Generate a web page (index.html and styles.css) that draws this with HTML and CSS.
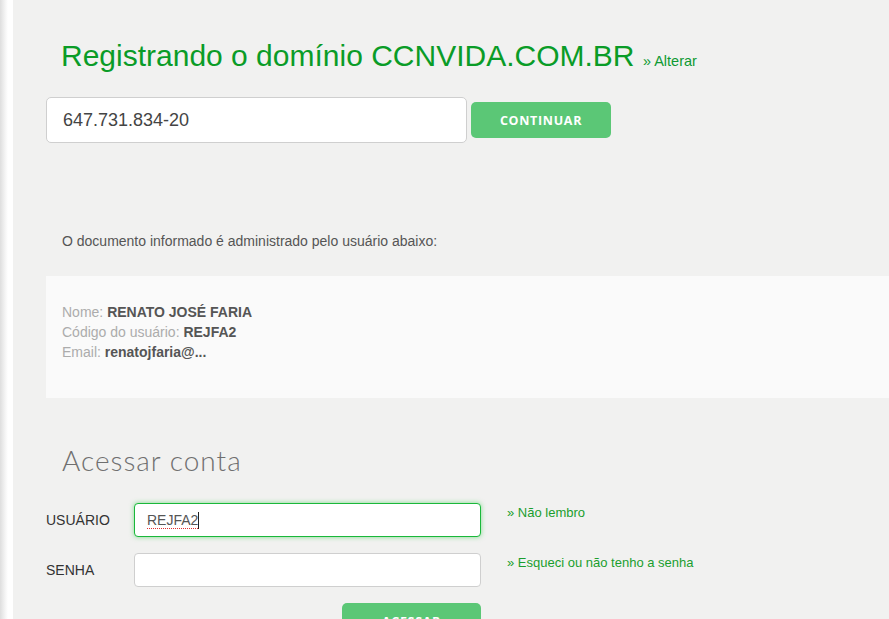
FILE: index.html
```html
<!DOCTYPE html>
<html lang="pt-BR">
<head>
<meta charset="utf-8">
<title>Registrando o domínio</title>
<link rel="stylesheet" href="styles.css">
</head>
<body>
<div class="page">
  <div class="edge"></div>
  <main class="main">
    <h1 class="title">Registrando o domínio CCNVIDA.COM.BR <a class="change" href="#">» Alterar</a></h1>
    <div class="doc-row">
      <div class="doc-input">647.731.834-20</div>
      <button class="btn btn-continue">CONTINUAR</button>
    </div>
    <p class="note">O documento informado é administrado pelo usuário abaixo:</p>
    <div class="user-box">
      <div class="line"><span class="lbl">Nome:</span> <b>RENATO JOSÉ FARIA</b></div>
      <div class="line"><span class="lbl">Código do usuário:</span> <b>REJFA2</b></div>
      <div class="line"><span class="lbl">Email:</span> <b>renatojfaria@...</b></div>
    </div>
    <h2 class="login-title">Acessar conta</h2>
    <div class="form-row">
      <label class="flabel">USUÁRIO</label>
      <div class="finput focus"><span class="typed">REJFA2</span><span class="caret"></span></div>
      <a class="flink" href="#">» Não lembro</a>
    </div>
    <div class="form-row">
      <label class="flabel">SENHA</label>
      <div class="finput"></div>
      <a class="flink" href="#">» Esqueci ou não tenho a senha</a>
    </div>
    <div class="submit-row">
      <button class="btn btn-access">ACESSAR</button>
    </div>
  </main>
</div>
</body>
</html>
```
FILE: styles.css
```css
html, body {
  margin: 0;
  padding: 0;
  background: #ffffff;
  height: 100%;
  overflow: hidden;
}
body {
  font-family: "Liberation Sans", Arial, sans-serif;
  color: #555;
}
.page {
  display: flex;
  min-height: 100%;
}
.edge {
  width: 13px;
  flex: none;
  background: linear-gradient(to right, #dedede 0px, #f4f4f4 5px, #ffffff 8px, #ffffff 13px);
}
.main {
  flex: 1;
  background: #f1f1f0;
  padding-left: 33px;
}
.title {
  margin: 38px 0 0 15px;
  height: 36px;
  font-size: 30px;
  line-height: 36px;
  font-weight: normal;
  color: #0a9c27;
  white-space: nowrap;
}
.change {
  font-size: 14.5px;
  line-height: 0;
  color: #0f9a33;
  text-decoration: none;
}
.doc-row {
  display: flex;
  align-items: center;
  margin-top: 23px;
  gap: 4px;
}
.doc-input {
  box-sizing: border-box;
  width: 421px;
  height: 46px;
  background: #fff;
  border: 1px solid #cfcfcf;
  border-radius: 5px;
  padding-left: 16px;
  font-size: 18px;
  line-height: 44px;
  color: #444;
}
.btn {
  border: none;
  border-radius: 5px;
  background: #5bc776;
  color: #fff;
  font-family: "Open Sans", "Liberation Sans", sans-serif;
  font-weight: 700;
  font-size: 12.5px;
  letter-spacing: 0.7px;
  width: 140px;
  height: 36px;
  padding: 0;
}
.note {
  margin: 88px 0 0 16px;
  font-size: 14px;
  line-height: 20px;
  color: #555;
}
.user-box {
  margin-top: 25px;
  background: #fafafa;
  padding: 26px 16px 36px;
  font-size: 14px;
  line-height: 20px;
}
.user-box .lbl {
  color: #acacac;
}
.user-box b {
  color: #555;
}
.login-title {
  margin: 44px 0 0 16px;
  font-family: Lato, "Open Sans", sans-serif;
  font-weight: 300;
  font-size: 28px;
  letter-spacing: 1px;
  line-height: 36px;
  color: #6f6f6f;
}
.form-row {
  display: flex;
  align-items: flex-start;
  margin-top: 25px;
  height: 34px;
}
.form-row + .form-row {
  margin-top: 16px;
}
.flabel {
  width: 88px;
  font-size: 14px;
  line-height: 34px;
  color: #333;
}
.finput {
  box-sizing: border-box;
  width: 347px;
  height: 34px;
  background: #fff;
  border: 1px solid #cfcfcf;
  border-radius: 4px;
  padding-left: 12px;
  font-size: 14px;
  line-height: 32px;
  color: #555;
  display: flex;
  align-items: center;
}
.finput.focus {
  border-color: #19b83a;
  box-shadow: 0 0 5px rgba(40, 200, 60, 0.55);
}
.typed {
  text-decoration: underline dotted #e03030;
  text-decoration-thickness: 1px;
  text-underline-offset: 3px;
}
.caret {
  display: inline-block;
  width: 1px;
  height: 17px;
  background: #222;
}
.flink {
  margin-left: 26px;
  margin-top: 2px;
  font-size: 13px;
  line-height: 16px;
  color: #1a9e2e;
  text-decoration: none;
}
.submit-row {
  margin-top: 16px;
  padding-left: 296px;
}
.btn-access {
  width: 139px;
  height: 36px;
  vertical-align: top;
}
```
